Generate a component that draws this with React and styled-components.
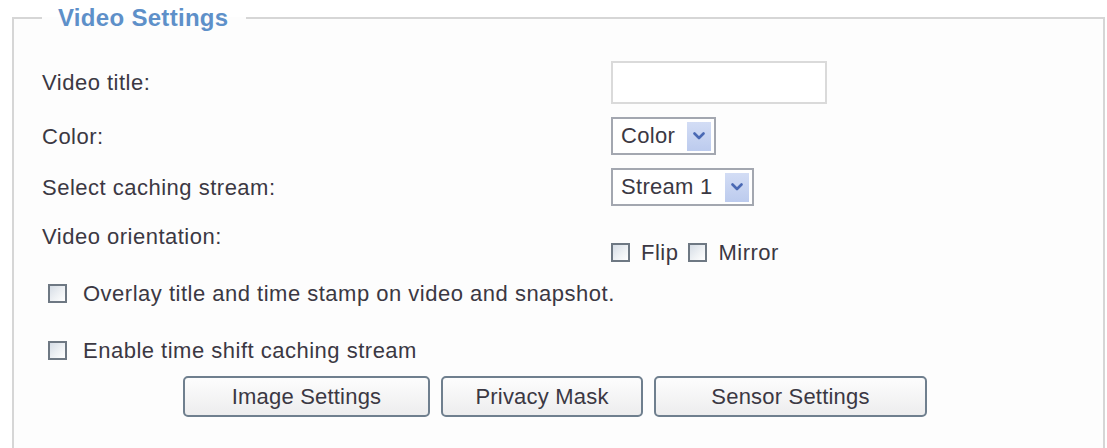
import React from "react";
import styled, { createGlobalStyle } from "styled-components";

const GlobalStyle = createGlobalStyle`
  html, body {
    margin: 0;
    padding: 0;
    background: #ffffff;
    overflow: hidden;
  }
  body {
    font-family: "Liberation Sans", Arial, sans-serif;
    color: #3b3843;
  }
`;

const Fieldset = styled.fieldset`
  box-sizing: border-box;
  margin: 4px 2px 0 12px;
  padding: 0 0 0 28px;
  height: 480px;
  border: 2px solid #d6d6d6;
  background: #fdfdfd;
`;

const Legend = styled.legend`
  margin-left: 0;
  padding: 0 18px 0 16px;
  font-size: 24px;
  font-weight: bold;
  letter-spacing: 0.3px;
  color: #5e90c9;
`;

const Form = styled.div`
  display: grid;
  grid-template-columns: 569px 1fr;
  row-gap: 13px;
  align-items: center;
  margin-top: 29px;
`;

const Label = styled.div`
  font-size: 22px;
  letter-spacing: 0.5px;
  line-height: 25px;
  align-self: ${({ $top }) => ($top ? "start" : "center")};
  padding-top: ${({ $top }) => ($top ? "5px" : "0")};
`;

const TextInput = styled.input`
  box-sizing: border-box;
  width: 216px;
  height: 43px;
  border: 2px solid #dadada;
  background: #ffffff;
  outline: none;
  font: inherit;
`;

const SelectBox = styled.div`
  box-sizing: border-box;
  display: inline-flex;
  align-items: center;
  justify-self: start;
  height: 38px;
  padding: 0 3px 0 8px;
  gap: 12px;
  border: 2px solid #a3a7b0;
  background: #ffffff;
  font-size: 22px;
  letter-spacing: 0.3px;
`;

const ArrowButton = styled.span`
  display: flex;
  align-items: center;
  justify-content: center;
  width: 24px;
  height: 29px;
  background: linear-gradient(#d3ddf5, #bccbee);
  color: #4a69b4;
`;

const Chevron = () => (
  <svg width="12" height="8" viewBox="0 0 12 8">
    <path d="M1.5 1.5 L6 6 L10.5 1.5" fill="none" stroke="currentColor" strokeWidth="2.6" strokeLinecap="round" strokeLinejoin="round" />
  </svg>
);

const Select = ({ value }) => (
  <SelectBox>
    <span>{value}</span>
    <ArrowButton>
      <Chevron />
    </ArrowButton>
  </SelectBox>
);

const Options = styled.div`
  display: flex;
  align-items: center;
  gap: 10px;
  align-self: start;
  padding-top: 21px;
`;

const CheckRow = styled.label`
  display: flex;
  align-items: center;
  gap: ${({ $gap }) => $gap || "12px"};
  font-size: 22px;
  letter-spacing: 0.5px;
  line-height: 25px;
  margin-top: ${({ $mt }) => $mt || "0"};
`;

const Box = styled.span`
  box-sizing: border-box;
  display: inline-block;
  width: 19px;
  height: 19px;
  border: 2px solid #6e7883;
  background: linear-gradient(135deg, #d6dde6 0%, #eef1f4 55%, #ffffff 100%);
  flex-shrink: 0;
`;

const Checkbox = ({ children, gap, mt }) => (
  <CheckRow $gap={gap} $mt={mt}>
    <Box />
    <span>{children}</span>
  </CheckRow>
);

const Standalone = styled.div`
  margin-left: 6px;
`;

const ButtonRow = styled.div`
  display: flex;
  gap: 11px;
  margin: 13px 0 0 141px;
`;

const Button = styled.button`
  box-sizing: border-box;
  width: ${({ $w }) => $w}px;
  height: 41px;
  border: 2px solid #6f7f8e;
  border-radius: 5px;
  background: linear-gradient(#fdfdfd, #ededee);
  font-family: inherit;
  font-size: 22px;
  letter-spacing: 0.2px;
  color: #3b3843;
  cursor: pointer;
`;

export default function App() {
  return (
    <>
      <GlobalStyle />
      <Fieldset>
        <Legend>Video Settings</Legend>
        <Form>
          <Label>Video title:</Label>
          <TextInput type="text" />

          <Label>Color:</Label>
          <Select value="Color" />

          <Label>Select caching stream:</Label>
          <Select value="Stream 1" />

          <Label $top>Video orientation:</Label>
          <Options>
            <Checkbox gap="11px">Flip</Checkbox>
            <Checkbox gap="11px">Mirror</Checkbox>
          </Options>
        </Form>

        <Standalone>
          <Checkbox gap="16px" mt="16px">Overlay title and time stamp on video and snapshot.</Checkbox>
          <Checkbox gap="16px" mt="32px">Enable time shift caching stream</Checkbox>
        </Standalone>

        <ButtonRow>
          <Button $w={247}>Image Settings</Button>
          <Button $w={202}>Privacy Mask</Button>
          <Button $w={273}>Sensor Settings</Button>
        </ButtonRow>
      </Fieldset>
    </>
  );
}
